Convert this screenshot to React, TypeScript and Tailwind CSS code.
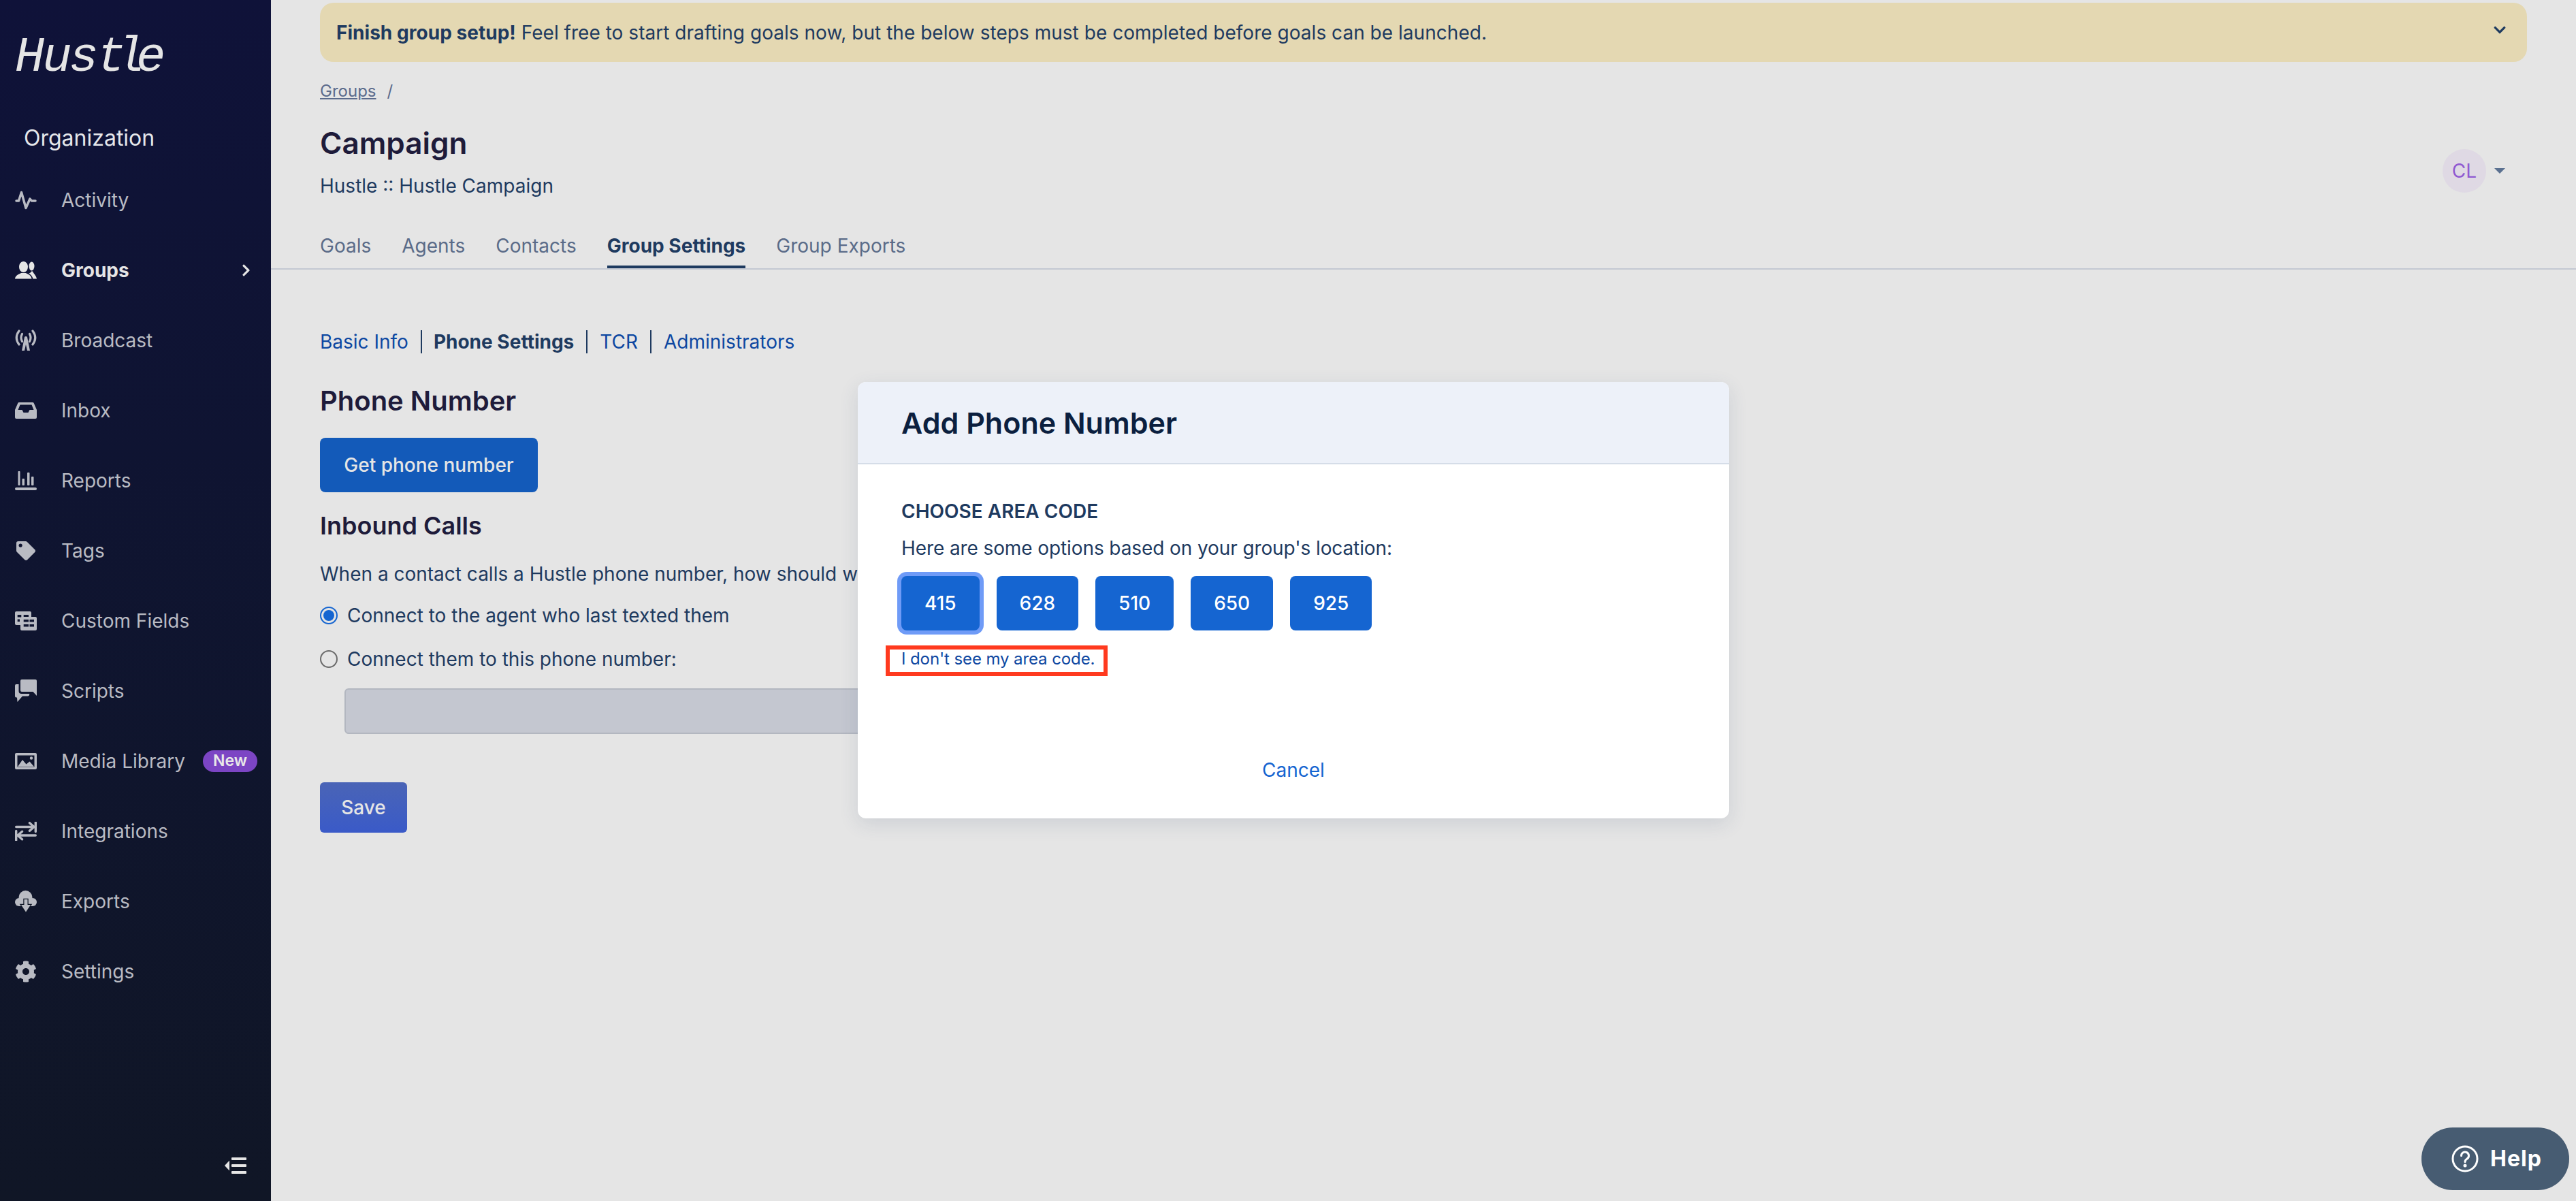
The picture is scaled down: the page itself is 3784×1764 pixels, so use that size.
import React from "react";
import { FaChevronDown, FaChevronRight, FaCog, FaTag } from "react-icons/fa";

const ActivityIcon = () => (
  <svg viewBox="0 0 32 28" className="w-[32px] h-[28px]" fill="none" stroke="currentColor" strokeWidth={3.5} strokeLinecap="round" strokeLinejoin="round">
    <path d="M2 15h3.500L9.500 2.500 16 25.500l6-13.500 2.500 3H30" />
  </svg>
);

const GroupsIcon = () => (
  <svg viewBox="0 0 32 26" className="w-[32px] h-[26px]" fill="currentColor">
    <ellipse cx="12.500" cy="8" rx="6.500" ry="8" />
    <path d="M0 25.500c.5-4.500 4-6 9-8.500h7c5 2.500 8 4 8.500 8.500z" />
    <ellipse cx="24.500" cy="7" rx="4" ry="6.500" />
    <path d="M24 14.500h2c.2 2 5 5.500 6 11h-5.500c-.8-3.500-3.500-6.500-6-8 2-.8 3.200-1.700 3.500-3z" />
  </svg>
);

const BroadcastIcon = () => (
  <svg viewBox="0 0 32 31" className="w-[32px] h-[31px]">
    <g fill="none" stroke="currentColor" strokeWidth={3.2} strokeLinecap="round">
      <path d="M6 2Q-1.500 12 6 22" />
      <path d="M10.500 6.500Q7.500 12 10.500 17.500" />
      <path d="M26 2Q33.500 12 26 22" />
      <path d="M21.500 6.500Q24.500 12 21.500 17.500" />
    </g>
    <path fill="currentColor" d="M14 11a2.500 2.500 0 0 1 4 0l4 20h-4l-2-9-2 9h-4z" />
  </svg>
);

const InboxIcon = () => (
  <svg viewBox="0 0 32 24" className="w-[32px] h-[24px]" fill="currentColor" fillRule="evenodd">
    <path d="M6 0h20a2 2 0 0 1 1.800 1.200L32 11v11a2 2 0 0 1-2 2H2a2 2 0 0 1-2-2V11l4.200-9.800A2 2 0 0 1 6 0zM7.500 3.500L4.500 11h6l2 4h7l2-4h6l-3-7.500z" />
  </svg>
);

const ReportsIcon = () => (
  <svg viewBox="0 0 32 28" className="w-[32px] h-[28px]" fill="currentColor">
    <rect x="0" y="24" width="32" height="4" rx="2" />
    <rect x="4.500" y="0" width="3" height="21" rx="1" />
    <rect x="10.500" y="11" width="3.500" height="10" rx="1" />
    <rect x="18" y="2" width="3.500" height="19" rx="1" />
    <rect x="24" y="8" width="3.500" height="13" rx="1" />
  </svg>
);

const FieldsIcon = () => (
  <svg viewBox="0 0 32 28" className="w-[32px] h-[28px]" fill="currentColor" fillRule="evenodd">
    <path d="M2 0h20a2 2 0 0 1 2 2v6H10a2 2 0 0 0-2 2v10H2a2 2 0 0 1-2-2V2a2 2 0 0 1 2-2zM3.700 5v3.500h5.600V5zm9 0v3.500H20V5zM3.700 11.500V15h3.300v-3.500z" />
    <path d="M10 8h20a2 2 0 0 1 2 2v16a2 2 0 0 1-2 2H10a2 2 0 0 1-2-2V10a2 2 0 0 1 2-2zm2.700 4v3.500H20V12zm8.800 0v3.500h6.500V12zm-8.800 7v3.500H20V19zm8.800 0v3.500h6.500V19z" />
  </svg>
);

const ScriptsIcon = () => (
  <svg viewBox="0 0 32 33" className="w-[32px] h-[33px]" fill="currentColor">
    <path d="M10 0h20a2 2 0 0 1 2 2v22l-5.500-6H10a2 2 0 0 1-2-2V2a2 2 0 0 1 2-2z" />
    <path d="M2 7h3.500v10a4 4 0 0 0 4 4H21a2.500 2.500 0 0 1-2.500 3.500H11L3.500 33 3 26.500H2a2 2 0 0 1-2-2V9a2 2 0 0 1 2-2z" />
  </svg>
);

const MediaIcon = () => (
  <svg viewBox="0 0 32 24" className="w-[32px] h-[24px]" fill="currentColor" fillRule="evenodd">
    <path d="M2 0h28a2 2 0 0 1 2 2v20a2 2 0 0 1-2 2H2a2 2 0 0 1-2-2V2a2 2 0 0 1 2-2zm1.500 3.500v17h25v-17z" />
    <path d="M4 20l7-10 5.500 6.500 5-4 6.500 7.500z" />
    <circle cx="24" cy="7.500" r="2.200" />
  </svg>
);

const IntegrationsIcon = () => (
  <svg viewBox="0 0 32 28" className="w-[32px] h-[28px]" fill="none" stroke="currentColor" strokeWidth={3.4} strokeLinecap="round" strokeLinejoin="round">
    <path d="M1.700 7.500H27M21.500 1.700l6.500 5.800-6.500 5.800M30.300 1v13.500" />
    <path d="M30.300 20H5M10.500 14.200L4 20l6.500 5.800M1.700 13.500V27" />
  </svg>
);

const ExportsIcon = () => (
  <svg viewBox="0 0 32 32" className="w-[32px] h-[32px]" fill="currentColor">
    <circle cx="15.500" cy="10" r="10" />
    <circle cx="6" cy="17" r="6" />
    <circle cx="26" cy="17" r="6" />
    <rect x="6" y="12" width="20" height="11" />
    <path d="M13.500 13h5v8h4.500L16 31.500 9 21h4.500z" stroke="#0f1626" strokeWidth={2.400} paintOrder="stroke" />
  </svg>
);

const CollapseIcon = () => (
  <svg viewBox="0 0 32 24" className="w-[32px] h-[24px]" fill="currentColor">
    <path d="M0 12l7-7.500v15z" />
    <rect x="10" y="0" width="22" height="4" rx="1" />
    <rect x="10" y="10" width="22" height="4" rx="1" />
    <rect x="10" y="20" width="22" height="4" rx="1" />
  </svg>
);

const NAV_ITEMS = [
  { label: "Activity", icon: <ActivityIcon /> },
  { label: "Groups", icon: <GroupsIcon />, active: true },
  { label: "Broadcast", icon: <BroadcastIcon /> },
  { label: "Inbox", icon: <InboxIcon /> },
  { label: "Reports", icon: <ReportsIcon /> },
  { label: "Tags", icon: <FaTag className="w-[28px] h-[28px] mx-[2px]" /> },
  { label: "Custom Fields", icon: <FieldsIcon /> },
  { label: "Scripts", icon: <ScriptsIcon /> },
  { label: "Media Library", icon: <MediaIcon />, badge: "New" },
  { label: "Integrations", icon: <IntegrationsIcon /> },
  { label: "Exports", icon: <ExportsIcon /> },
  { label: "Settings", icon: <FaCog className="w-[32px] h-[32px]" /> },
];

const TABS = ["Goals", "Agents", "Contacts", "Group Settings", "Group Exports"];
const AREA_CODES = ["415", "628", "510", "650", "925"];

const Sidebar = () => (
  <aside className="w-[398px] shrink-0 h-full flex flex-col bg-gradient-to-b from-[#0f1239] to-[#101626] text-[#b9bbc3]">
    <div className="pl-[22px] pt-[50px] h-[112px] font-['Liberation_Mono',monospace] italic text-[72px] leading-[70px] text-[#e5e5e5]">
      <span className="tracking-[-3px]">H</span>
      <span className="tracking-[-4px]">u</span>
      <span className="tracking-[-3px]">s</span>
      <span className="tracking-[-15px]">t</span>
      <span className="tracking-[-13px]">l</span>
      <span>e</span>
    </div>
    <div className="pl-[35px] mt-[71px] text-[32px] leading-[40px] text-[#e5e7eb]">Organization</div>
    <nav className="mt-[19px] flex flex-col">
      {NAV_ITEMS.map((item) => (
        <div key={item.label} className="h-[103px] pl-[22px] flex items-center">
          <span className={`w-[32px] flex justify-center ${item.active ? "text-[#e5e5e5]" : ""}`}>{item.icon}</span>
          <span className={`ml-[36px] text-[28px] leading-[40px] ${item.active ? "font-bold text-[#e5e5e5]" : ""}`}>{item.label}</span>
          {item.active && <FaChevronRight className="ml-auto mr-[30px] w-[13px] h-[20px] text-[#e5e5e5]" />}
          {item.badge && (
            <span className="ml-auto mr-[20px] h-[32px] w-[80px] rounded-full bg-[#7c45c4] text-[#e8e8e8] text-[23px] font-semibold flex items-center justify-center">
              {item.badge}
            </span>
          )}
        </div>
      ))}
    </nav>
    <div className="mt-auto mb-[40px] mr-[36px] flex justify-end text-[#e5e5e5]">
      <CollapseIcon />
    </div>
  </aside>
);

const Modal = () => (
  <div className="absolute left-[1260px] top-[561px] w-[1280px] h-[641px] rounded-[12px] bg-white shadow-[0_8px_28px_rgba(60,80,110,0.14)] flex flex-col overflow-hidden">
    <div className="h-[121px] shrink-0 bg-[#edf1f9] border-b-2 border-[#d5dde8] pl-[64px] flex items-center">
      <h2 className="text-[43px] leading-[56px] font-semibold text-[#0b1f3f]">Add Phone Number</h2>
    </div>
    <div className="pl-[64px] flex flex-col">
      <h3 className="mt-[51px] text-[28px] leading-[36px] font-semibold text-[#1e3a5f]">CHOOSE AREA CODE</h3>
      <p className="mt-[16px] text-[28px] leading-[40px] tracking-[-0.1px] text-[#1e3a5f]">Here are some options based on your group's location:</p>
      <div className="mt-[21px] flex gap-[25px]">
        {AREA_CODES.map((code, i) => (
          <button
            key={code}
            className={`h-[80px] px-[34px] rounded-[8px] bg-[#1565d1] text-white text-[28px] font-medium ${i === 0 ? "ring-[6px] ring-[#6f9bf7]" : ""}`}
          >
            {code}
          </button>
        ))}
      </div>
      <a className="mt-[26px] text-[24px] leading-[32px] tracking-[-0.1px] text-[#0d47a1]">I don't see my area code.</a>
    </div>
    <div className="mt-[127px] text-center text-[28px] leading-[40px] text-[#1565d1]">Cancel</div>
  </div>
);

export default function App() {
  return (
    <div className="relative w-[3784px] h-[1764px] overflow-hidden flex bg-[#e5e5e5] font-['Inter',sans-serif]">
      <Sidebar />
      <main className="flex-1 min-w-0">
        <div className="mt-[4px] ml-[72px] mr-[72px] h-[87px] rounded-[20px] bg-[#e4d8b2] pl-[24px] pr-[30px] flex items-center justify-between text-[28px] tracking-[0.03px] text-[#1e3a5f]">
          <p className="leading-[40px]">
            <span className="font-bold">Finish group setup!</span> Feel free to start drafting goals now, but the below steps must be completed before goals can be launched.
          </p>
          <FaChevronDown className="w-[20px] h-[20px] -mt-[8px] text-[#1e3a5f]" />
        </div>

        <header className="relative border-b-2 border-[#c4c8d2]">
          <div className="pl-[72px]">
            <div className="mt-[27px] text-[24px] leading-[32px] text-[#5b6b8c]">
              <span className="underline">Groups</span>
              <span className="ml-[16px]">/</span>
            </div>
            <h1 className="mt-[32px] text-[44px] leading-[56px] font-semibold text-[#1e1b3a]">Campaign</h1>
            <p className="mt-[15px] text-[28px] leading-[40px] text-[#1e3a5f]">Hustle :: Hustle Campaign</p>
            <div className="mt-[48px] flex gap-[45px]">
              {TABS.map((tab) => (
                <div
                  key={tab}
                  className={`pb-[9px] text-[28px] leading-[40px] border-b-4 ${tab === "Group Settings" ? "font-bold text-[#1e3a5f] border-[#1e3a5f]" : "text-[#5a6b88] border-transparent"}`}
                >
                  {tab}
                </div>
              ))}
            </div>
          </div>
          <div className="absolute right-[104px] top-[101px] flex items-center">
            <div className="w-[64px] h-[64px] rounded-full bg-[#dfd9e4] text-[#9059d1] text-[28px] flex items-center justify-center">CL</div>
            <div className="ml-[12px] w-0 h-0 border-x-[8px] border-x-transparent border-t-[8px] border-t-[#5a7090]" />
          </div>
        </header>

        <section className="pl-[72px]">
          <div className="mt-[89px] h-[34px] flex items-center text-[28px] text-[#0d47a1]">
            <span>Basic Info</span>
            <span className="ml-[18px] mr-[17px] w-[2px] h-[34px] bg-[#1e3a5f]" />
            <span className="font-bold text-[#1e3a5f]">Phone Settings</span>
            <span className="mx-[18px] w-[2px] h-[34px] bg-[#1e3a5f]" />
            <span>TCR</span>
            <span className="mx-[18px] w-[2px] h-[34px] bg-[#1e3a5f]" />
            <span>Administrators</span>
          </div>
          <h2 className="mt-[46px] text-[40px] leading-[48px] font-semibold text-[#1e1b3a]">Phone Number</h2>
          <button className="mt-[30px] block w-[320px] h-[80px] rounded-[8px] bg-[#135ab9] text-[#e5e5e5] text-[28px] font-medium">Get phone number</button>
          <h2 className="mt-[25px] text-[36px] leading-[48px] font-semibold text-[#1e1b3a]">Inbound Calls</h2>
          <p className="mt-[27px] text-[28px] leading-[40px] text-[#1e3a5f]">When a contact calls a Hustle phone number, how should we route it?</p>
          <label className="mt-[21px] flex items-center text-[28px] leading-[40px] text-[#1e3a5f]">
            <span className="w-[26px] h-[26px] rounded-full border-2 border-[#1565d1] flex items-center justify-center">
              <span className="w-[16px] h-[16px] rounded-full bg-[#1565d1]" />
            </span>
            <span className="ml-[14px]">Connect to the agent who last texted them</span>
          </label>
          <label className="mt-[24px] flex items-center text-[28px] leading-[40px] text-[#1e3a5f]">
            <span className="w-[26px] h-[26px] rounded-full border-2 border-[#6b6b6b]" />
            <span className="ml-[14px]">Connect them to this phone number:</span>
          </label>
          <div className="mt-[23px] ml-[36px] w-[1000px] h-[67px] rounded-[6px] bg-[#c4c7d0] border-2 border-[#b3b7c0]" />
          <button className="mt-[71px] block w-[128px] h-[74px] rounded-[6px] bg-gradient-to-b from-[#4a64b6] to-[#3a5ac8] text-[#e5e5e5] text-[28px] font-medium">Save</button>
        </section>
      </main>

      <Modal />

      {/* annotation drawn over the screenshot */}
      <div className="absolute left-[1301px] top-[948px] w-[326px] h-[45px] border-[6px] border-[#ff3a1f]" />

      <div className="absolute left-[3557px] top-[1656px] w-[217px] h-[92px] rounded-full bg-[#475c72] flex items-center pl-[44px] text-white">
        <svg viewBox="0 0 40 40" className="w-[40px] h-[40px]" fill="none" stroke="currentColor" strokeWidth={3} strokeLinecap="round">
          <circle cx="20" cy="20" r="18" />
          <path d="M14.500 15.500a5.500 5.500 0 1 1 8.500 4.600c-2 1.300-3 2.200-3 4.400" />
          <circle cx="20" cy="30" r="1" fill="currentColor" />
        </svg>
        <span className="ml-[17px] text-[32px] font-bold tracking-[1px]">Help</span>
      </div>
    </div>
  );
}
